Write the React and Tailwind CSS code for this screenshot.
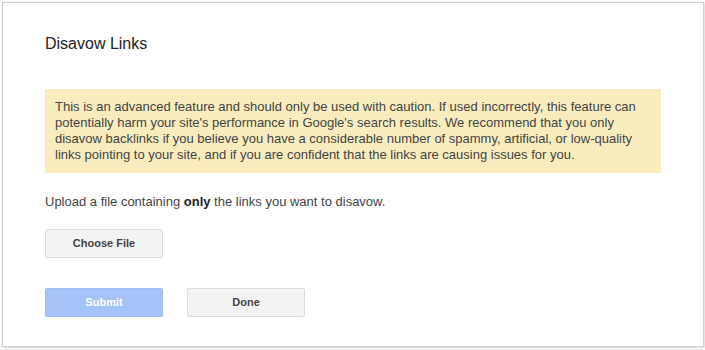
export default function App() {
  const btn =
    'flex h-[29px] w-[118px] items-center justify-center rounded-[2px] border text-[11px] font-bold'

  return (
    <div className="h-[350px] w-[705px] bg-white pl-[2px] pt-[2px] font-['Liberation_Sans',Arial,sans-serif]">
      <div className="h-[345px] w-[702px] border border-[#d0d0d0] bg-white pl-[42px] pr-[42px] pt-[31px] shadow-[1px_1px_3px_rgba(0,0,0,0.18)]">
        <h1 className="text-[16px] leading-[20px] text-[#222]">Disavow Links</h1>

        <div className="mt-[35px] w-[616px] bg-[#f9edbe] px-[10px] py-[10px] text-[13px] leading-[16px] text-[#444]">
          This is an advanced feature and should only be used with caution. If used incorrectly, this feature can
          potentially harm your site's performance in Google's search results. We recommend that you only
          disavow backlinks if you believe you have a considerable number of spammy, artificial, or low-quality
          links pointing to your site, and if you are confident that the links are causing issues for you.
        </div>

        <p className="mt-[21px] text-[13px] leading-[16px] text-[#444]">
          Upload a file containing <b className="text-[#222]">only</b> the links you want to disavow.
        </p>

        <button
          type="button"
          className={`${btn} mt-[19px] border-[#dcdcdc] bg-[#f3f3f3] text-[#444]`}
        >
          Choose File
        </button>

        <div className="mt-[30px] flex gap-[24px]">
          <button
            type="button"
            disabled
            className={`${btn} border-[#9dbdf4] bg-[#a5c3f8] text-white`}
          >
            Submit
          </button>
          <button
            type="button"
            className={`${btn} border-[#dcdcdc] bg-[#f3f3f3] text-[#444]`}
          >
            Done
          </button>
        </div>
      </div>
    </div>
  )
}
